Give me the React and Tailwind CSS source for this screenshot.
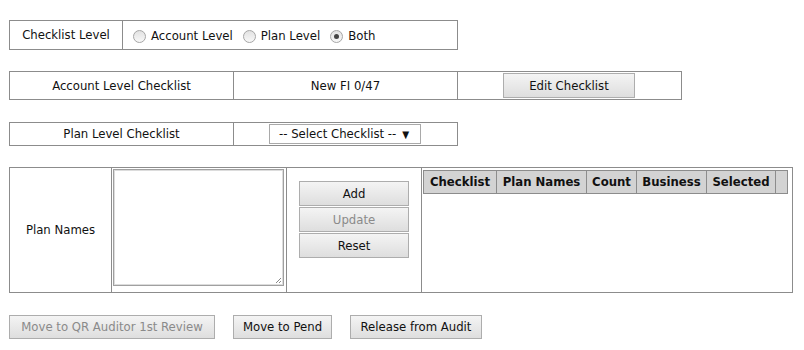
import React from "react";

const font = { fontFamily: '"DejaVu Sans Condensed", "DejaVu Sans", sans-serif' };

function Radio({ checked }) {
  return (
    <span className="inline-flex items-center justify-center w-[13px] h-[13px] rounded-full border border-[#a6a6a6] bg-gradient-to-b from-[#e2e2e2] to-[#f8f8f8]">
      {checked && <span className="w-[5px] h-[5px] rounded-full bg-[#444]" />}
    </span>
  );
}

function Btn({ className = "", disabled, children }) {
  return (
    <div
      className={
        "flex items-center justify-center border border-[#adadad] bg-gradient-to-b from-[#f4f4f4] to-[#dedede] text-[13px] " +
        (disabled ? "text-[#8a8a8a] " : "text-[#111] ") +
        className
      }
    >
      {children}
    </div>
  );
}

export default function App() {
  return (
    <div className="bg-white w-[804px] h-[350px] text-[13px] text-[#111] pl-[9px] pt-[20px]" style={font}>
      {/* Row 1 */}
      <div className="flex w-[449px] h-[30px] border border-[#8c8c8c]">
        <div className="w-[113px] flex items-center justify-center border-r border-[#8c8c8c]">Checklist Level</div>
        <div className="flex items-center pl-[10px] pt-[2px]">
          <Radio />
          <span className="ml-[5px] mr-[10px]">Account Level</span>
          <Radio />
          <span className="ml-[5px] mr-[10px]">Plan Level</span>
          <Radio checked />
          <span className="ml-[5px]">Both</span>
        </div>
      </div>

      {/* Row 2 */}
      <div className="flex w-[673px] h-[29px] border border-[#8c8c8c] mt-[21px]">
        <div className="w-[224px] flex items-center justify-center border-r border-[#8c8c8c]">Account Level Checklist</div>
        <div className="w-[224px] flex items-center justify-center border-r border-[#8c8c8c]">New FI 0/47</div>
        <div className="flex-1 flex items-center pl-[45px]">
          <Btn className="w-[132px] h-[25px]">Edit Checklist</Btn>
        </div>
      </div>

      {/* Row 3 */}
      <div className="flex w-[449px] h-[24px] border border-[#8c8c8c] mt-[22px]">
        <div className="w-[224px] flex items-center justify-center border-r border-[#8c8c8c]">Plan Level Checklist</div>
        <div className="flex-1 flex items-center pl-[35px]">
          <div className="w-[152px] h-[20px] border border-[#a9a9a9] flex items-center pl-[9px] gap-[6px]">
            <span>-- Select Checklist --</span>
            <span className="text-[10px]">▼</span>
          </div>
        </div>
      </div>

      {/* Row 4 */}
      <div className="flex w-[784px] h-[126px] border border-[#8c8c8c] mt-[21px]">
        <div className="w-[102px] flex items-center justify-center border-r border-[#8c8c8c]">Plan Names</div>
        <div className="w-[175px] border-r border-[#8c8c8c] p-[1px]">
          <div className="relative w-[171px] h-[117px] border border-[#a0a0a0] shadow-[inset_0_0_0_1px_#dcdcdc]">
            <svg className="absolute right-[1px] bottom-[1px]" width="8" height="8" viewBox="0 0 8 8">
              <path d="M7 2 L2 7 M7 5 L5 7" stroke="#888" strokeWidth="1" />
            </svg>
          </div>
        </div>
        <div className="w-[135px] border-r border-[#8c8c8c] pl-[12px] pt-[13px] flex flex-col gap-[1px]">
          <Btn className="w-[110px] h-[25px]">Add</Btn>
          <Btn className="w-[110px] h-[25px]" disabled>Update</Btn>
          <Btn className="w-[110px] h-[25px]">Reset</Btn>
        </div>
        <div className="flex-1 pl-[1px] pt-[2px]">
          <div className="flex h-[24px] w-[365px] border border-[#8c8c8c] bg-[#d3d3d3] font-bold text-[13px]">
            <div className="w-[73px] flex items-center justify-center border-r border-[#8c8c8c]">Checklist</div>
            <div className="w-[90px] flex items-center justify-center border-r border-[#8c8c8c]">Plan Names</div>
            <div className="w-[50px] flex items-center justify-center border-r border-[#8c8c8c]">Count</div>
            <div className="w-[70px] flex items-center justify-center border-r border-[#8c8c8c]">Business</div>
            <div className="w-[69px] flex items-center justify-center border-r border-[#8c8c8c]">Selected</div>
            <div className="flex-1" />
          </div>
        </div>
      </div>

      {/* Bottom buttons */}
      <div className="flex mt-[22px]">
        <Btn className="w-[206px] h-[24px]" disabled>Move to QR Auditor 1st Review</Btn>
        <Btn className="w-[99px] h-[24px] ml-[18px]">Move to Pend</Btn>
        <Btn className="w-[132px] h-[24px] ml-[18px]">Release from Audit</Btn>
      </div>
    </div>
  );
}
